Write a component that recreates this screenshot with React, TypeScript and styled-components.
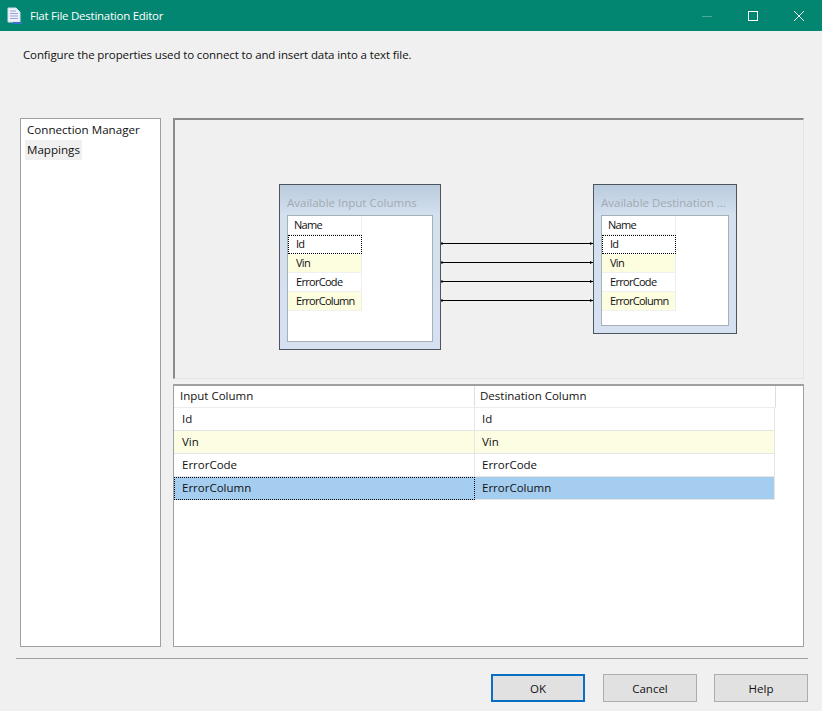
import React from "react";
import styled, { createGlobalStyle } from "styled-components";

const Global = createGlobalStyle`
  html, body { margin: 0; padding: 0; background: #f0f0f0; }
  * { box-sizing: border-box; }
`;

const font = `"Open Sans", "Noto Sans", "Liberation Sans", sans-serif`;

const Window = styled.div`
  width: 822px;
  height: 711px;
  background: #f0f0f0;
  font-family: ${font};
  font-size: 11.5px;
  color: #111;
  display: flex;
  flex-direction: column;
  overflow: hidden;
`;

const TitleBar = styled.div`
  height: 31px;
  flex: none;
  background: #038671;
  color: #fff;
  display: flex;
  align-items: center;
  padding-left: 7px;
`;

const TitleText = styled.span`
  margin-left: 7px;
  font-size: 11.5px;
  letter-spacing: -0.25px;
`;

const WindowButtons = styled.div`
  margin-left: auto;
  display: flex;
  height: 100%;
`;

const WindowButton = styled.div`
  width: 46px;
  display: flex;
  align-items: center;
  justify-content: center;
`;

const Description = styled.div`
  height: 87px;
  flex: none;
  padding: 15px 0 0 23px;
  font-size: 11.5px;
  letter-spacing: -0.12px;
  line-height: 17px;
`;

const Main = styled.div`
  height: 529px;
  flex: none;
  margin-left: 20px;
  width: 784px;
  display: flex;
  gap: 12px;
`;

const NavList = styled.div`
  width: 141px;
  flex: none;
  background: #fff;
  border: 1px solid #a0a0a0;
  padding: 1px 1px 0 1px;
`;

const NavItem = styled.div<{ $selected?: boolean }>`
  height: 20px;
  line-height: 19px;
  font-size: 11.6px;
  padding: 0 5px;
  ${(p) => p.$selected && "margin-left: 3px; padding: 0 2px; width: 57px; background: #f0f0f0;"}
`;

const RightColumn = styled.div`
  flex: 1;
  display: flex;
  flex-direction: column;
  gap: 5px;
  min-width: 0;
`;

const Canvas = styled.div`
  height: 261px;
  flex: none;
  position: relative;
  border: 2px solid #8a8a8a;
  border-right: 1px solid #e4e4e4;
  border-bottom: 1px solid #e4e4e4;
  background: #f0f0f0;
`;

const Connectors = styled.svg`
  position: absolute;
  left: 266px;
  top: 118px;
`;

const ColumnsBox = styled.div<{ $x: number; $w: number; $h: number }>`
  position: absolute;
  left: ${(p) => p.$x}px;
  top: 64px;
  width: ${(p) => p.$w}px;
  height: ${(p) => p.$h}px;
  border: 1px solid #4d5560;
  background: linear-gradient(#b9cbdd 0, #d3e0ee 30px, #d5e1f0 100%);
  padding: 9px 7px 7px 7px;
  display: flex;
  flex-direction: column;
`;

const BoxTitle = styled.div`
  height: 21px;
  line-height: 18px;
  color: #a3a9b0;
  font-size: 11.5px;
  white-space: nowrap;
`;

const BoxList = styled.div`
  flex: 1;
  background: #fff;
  border: 1px solid #a6afba;
  width: 100%;
`;

const BoxRow = styled.div<{ $tone?: "alt" | "focus" | "head" }>`
  width: 74px;
  height: 19px;
  line-height: 18px;
  font-size: 11px;
  letter-spacing: -0.7px;
  padding-left: ${(p) => (p.$tone === "head" ? "6px" : "8px")};
  background: ${(p) => (p.$tone === "alt" ? "#fdfde0" : "#fff")};
  border-right: 1px solid #eeeeee;
  border-bottom: 1px solid #f0f0f0;
  ${(p) => p.$tone === "focus" && "border: 1px dotted #000; padding-left: 7px; line-height: 16px;"}
`;

const Grid = styled.div`
  flex: 1;
  background: #fff;
  border: 1px solid #a0a0a0;
  border-top: 2px solid #a0a0a0;
`;

const GridRow = styled.div`
  display: flex;
  height: 23px;
  width: 601px;
`;

const HeaderRow = styled(GridRow)`
  height: 22px;
  width: 602px;
  border-bottom: 1px solid #ececec;
`;

const HeaderCell = styled.div<{ $w: number; $inset: number }>`
  width: ${(p) => p.$w}px;
  flex: none;
  line-height: 20px;
  padding-left: ${(p) => p.$inset}px;
  border-right: 1px solid #dedede;
`;

const Cell = styled.div<{ $w: number; $inset: number; $bg: string; $focus?: boolean }>`
  width: ${(p) => p.$w}px;
  flex: none;
  line-height: 22px;
  padding-left: ${(p) => p.$inset}px;
  background: ${(p) => p.$bg};
  border-bottom: 1px solid #e6e6e6;
  border-right: 1px solid #e6e6e6;
  ${(p) => p.$focus && "border: 1px dotted #000; padding-left: 7px; line-height: 20px;"}
`;

const Separator = styled.div`
  flex: none;
  height: 1px;
  margin: 11px 14px 0 16px;
  background: #a0a0a0;
`;

const Footer = styled.div`
  flex: 1;
  display: flex;
  justify-content: flex-end;
  padding: 15px 14px 0 0;
  gap: 18px;
`;

const Button = styled.div<{ $primary?: boolean }>`
  width: 94px;
  height: 28px;
  background: #e1e1e1;
  border: ${(p) => (p.$primary ? "2px solid #0a6fc2" : "1px solid #adadad")};
  display: flex;
  align-items: center;
  justify-content: center;
  font-size: 11.5px;
`;

const HelpButton = styled(Button)`
  margin-left: -1px;
`;

const rows = ["Id", "Vin", "ErrorCode", "ErrorColumn"];

const FileIcon = () => (
  <svg width="16" height="18" viewBox="0 0 16 18">
    <path d="M1 1h8l4 4v10H1z" fill="#eef0fa" stroke="#d8dcf0" />
    <path d="M3 4h6M3 6.5h8M3 9h8M3 11.5h8" stroke="#9ba6d8" strokeWidth="1" />
    <path d="M6 15h9v2H6z" fill="#3f6fc4" />
  </svg>
);

const Columns = ({ x, w, h, title }: { x: number; w: number; h: number; title: string }) => (
  <ColumnsBox $x={x} $w={w} $h={h}>
    <BoxTitle>{title}</BoxTitle>
    <BoxList>
      <BoxRow $tone="head">Name</BoxRow>
      {rows.map((r, i) => (
        <BoxRow key={r} $tone={i === 0 ? "focus" : i % 2 ? "alt" : undefined}>
          {r}
        </BoxRow>
      ))}
    </BoxList>
  </ColumnsBox>
);

export default function App() {
  return (
    <Window>
      <Global />
      <TitleBar>
        <FileIcon />
        <TitleText>Flat File Destination Editor</TitleText>
        <WindowButtons>
          <WindowButton>
            <svg width="12" height="12" viewBox="0 0 12 12">
              <path d="M1 6.5h10" stroke="#4fa999" strokeWidth="1" />
            </svg>
          </WindowButton>
          <WindowButton>
            <svg width="12" height="12" viewBox="0 0 12 12">
              <rect x="1.5" y="1.5" width="9" height="9" fill="none" stroke="#fff" strokeWidth="1" />
            </svg>
          </WindowButton>
          <WindowButton>
            <svg width="12" height="12" viewBox="0 0 12 12">
              <path d="M1 1l10 10M11 1L1 11" stroke="#fff" strokeWidth="1" />
            </svg>
          </WindowButton>
        </WindowButtons>
      </TitleBar>
      <Description>Configure the properties used to connect to and insert data into a text file.</Description>
      <Main>
        <NavList>
          <NavItem>Connection Manager</NavItem>
          <NavItem $selected>Mappings</NavItem>
        </NavList>
        <RightColumn>
          <Canvas>
            <Columns x={104} w={162} h={166} title="Available Input Columns" />
            <Columns x={418} w={144} h={150} title="Available Destination ..." />
            <Connectors width="152" height="70" viewBox="0 0 152 70">
              {[5, 24, 43, 62].map((y) => (
                <g key={y}>
                  <path d={`M0 ${y + 0.5}H152`} stroke="#000" strokeWidth="1" />
                  <rect x="0" y={y - 0.5} width="2" height="2" fill="#000" />
                  <path d={`M149 ${y - 1}l3 1.5-3 1.5z`} fill="#000" />
                </g>
              ))}
            </Connectors>
          </Canvas>
          <Grid>
            <HeaderRow>
              <HeaderCell $w={301} $inset={6}>Input Column</HeaderCell>
              <HeaderCell $w={301} $inset={5}>Destination Column</HeaderCell>
            </HeaderRow>
            {rows.map((r, i) => {
              const selected = i === 3;
              const bg = selected ? "#a4cdf0" : i === 1 ? "#fdfde3" : "#fff";
              return (
                <GridRow key={r}>
                  <Cell $w={301} $inset={8} $bg={bg} $focus={selected}>{r}</Cell>
                  <Cell $w={300} $inset={7} $bg={bg}>{r}</Cell>
                </GridRow>
              );
            })}
          </Grid>
        </RightColumn>
      </Main>
      <Separator />
      <Footer>
        <Button $primary>OK</Button>
        <Button>Cancel</Button>
        <HelpButton>Help</HelpButton>
      </Footer>
    </Window>
  );
}
